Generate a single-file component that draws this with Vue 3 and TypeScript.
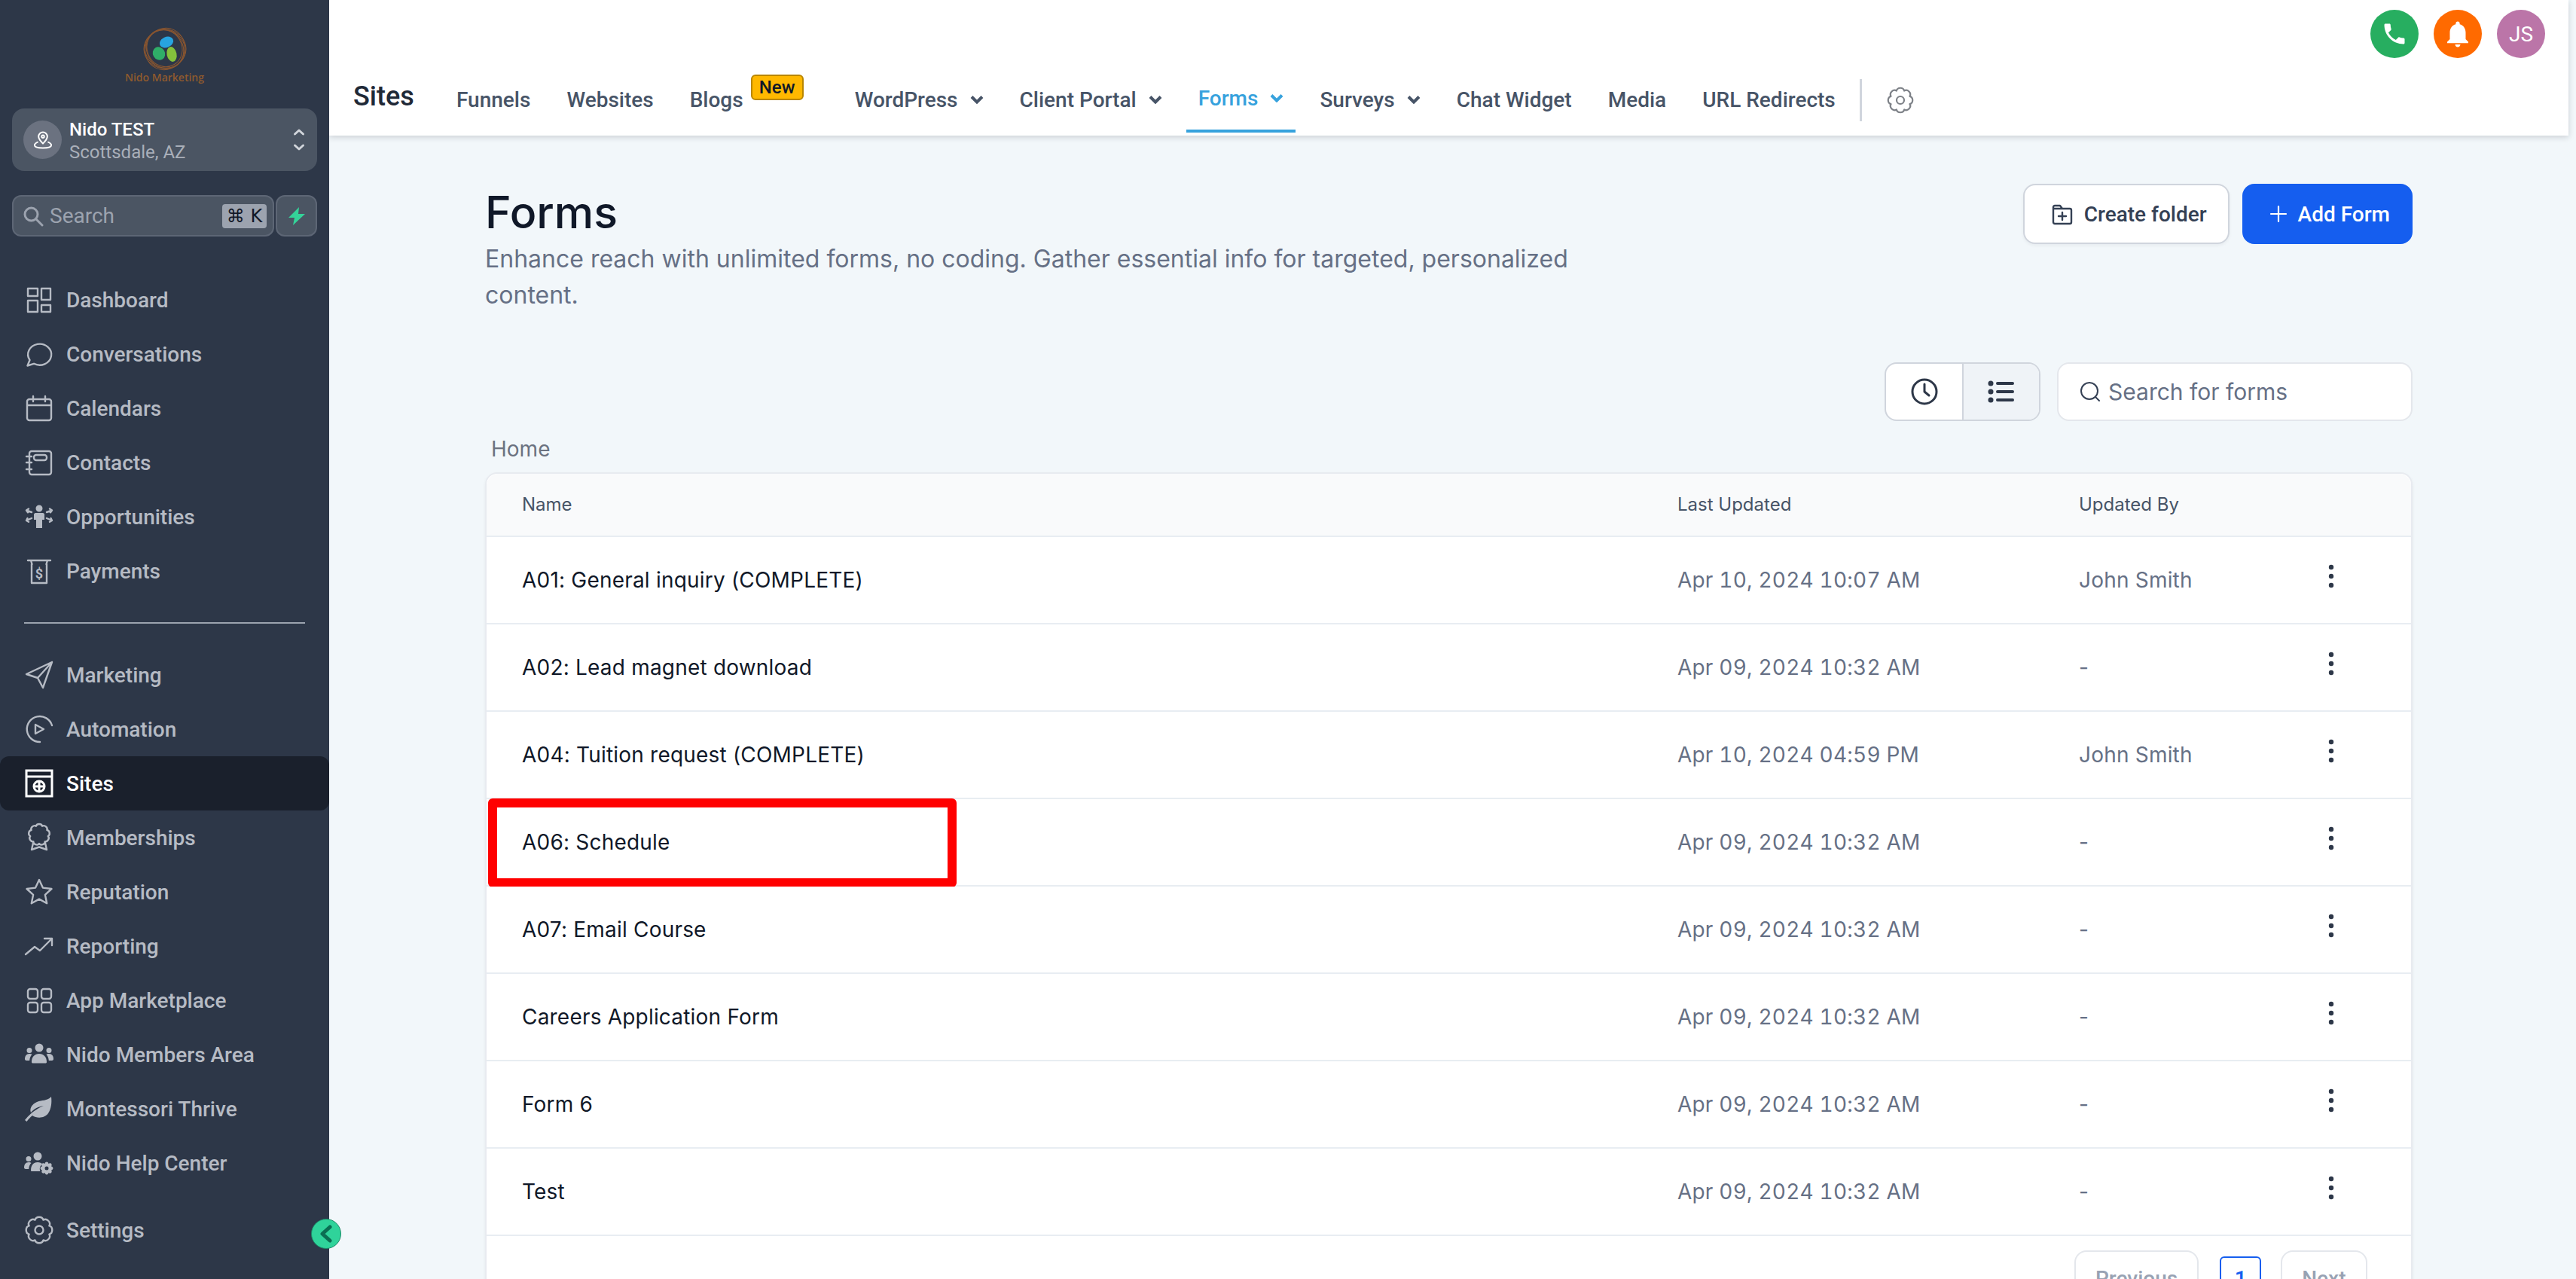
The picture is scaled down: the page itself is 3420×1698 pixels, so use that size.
<script setup lang="ts">
interface NavIcon {
  s?: string; // stroked part
  f?: string; // filled part
  t?: string; // small glyph in the middle
}
interface NavItem {
  label: string;
  icon: NavIcon;
  active?: boolean;
}

const circle = (cx: number, cy: number, r: number) =>
  `M${cx - r} ${cy}a${r} ${r} 0 1 0 ${r * 2} 0a${r} ${r} 0 1 0 ${-r * 2} 0z`;

const box = (x: number, y: number, w: number, h: number, r = 0) =>
  `M${x + r} ${y}h${w - 2 * r}a${r} ${r} 0 0 1 ${r} ${r}v${h - 2 * r}a${r} ${r} 0 0 1 ${-r} ${r}h${2 * r - w}a${r} ${r} 0 0 1 ${-r} ${-r}v${2 * r - h}a${r} ${r} 0 0 1 ${r} ${-r}z`;

// scalloped ring, used by the gears and the membership badge
const gear = (cx: number, cy: number, valley: number, tip: number, lobes: number) => {
  const step = (Math.PI * 2) / lobes;
  const pt = (a: number, r: number) =>
    `${(cx + Math.cos(a) * r).toFixed(2)} ${(cy + Math.sin(a) * r).toFixed(2)}`;
  let d = `M${pt(-Math.PI / 2 - step / 2, valley)}`;
  for (let i = 0; i < lobes; i++) {
    const a = -Math.PI / 2 - step / 2 + i * step;
    d += `C${pt(a + step * 0.22, tip * 1.12)} ${pt(a + step * 0.78, tip * 1.12)} ${pt(a + step, valley)}`;
  }
  return d + "z";
};

const people =
  circle(20, 11, 5.5) +
  "M10 30c0-7 4-11 10-11s10 4 10 11c0 1-1 1.500-2 1.500H12c-1 0-2-.5-2-1.500z" +
  circle(7, 14.500, 3.500) +
  circle(33, 14.500, 3.500) +
  "M1 26c0-4 2-7 6-7 1.500 0 2.500.4 3.500 1-2 2-3 4.500-3.300 8H3c-1 0-2-1-2-2z" +
  "M39 26c0-4-2-7-6-7-1.500 0-2.500.4-3.500 1 2 2 3 4.500 3.300 8H37c1 0 2-1 2-2z";

const mainNav: NavItem[] = [
  {
    label: "Dashboard",
    icon: { s: box(5, 5, 13, 10) + box(23, 5, 12, 15) + box(5, 21, 13, 15) + box(23, 27, 12, 9) },
  },
  {
    label: "Conversations",
    icon: { s: "M4.500 35.500 7.500 28A15.500 14 0 1 1 13 32.800z" },
  },
  {
    label: "Calendars",
    icon: { s: box(4, 8, 32, 28, 3) + "M4 16h32M12 4v7M28 4v7" },
  },
  {
    label: "Contacts",
    icon: { s: box(7, 5, 29, 31, 3) + box(13, 10, 17, 7, 3) + "M3 12h7M3 20h7M3 29h7" },
  },
  {
    label: "Opportunities",
    icon: {
      f: circle(20, 9, 4.500) + "M15 15h10c1 0 2 1 2 2v7h-3v11h-8V24h-3v-7c0-1 1-2 2-2z",
      s: "M10 14 3 11.500M3 11.500l3-2M3 11.500l2 2.800M30 14l7-2.500M37 11.500l-3-2M37 11.500l-2 2.800M10 22l-7 3M3 25l3 1.800M3 25l1.500-3M30 22l7 3M37 25l-3 1.800M37 25l-1.500-3",
    },
  },
  {
    label: "Payments",
    icon: { s: "M5 6h30M9 6l1.500 5M31 6l-1.500 5M10 11v25h20V11", t: "$" },
  },
];

const growNav: NavItem[] = [
  {
    label: "Marketing",
    icon: { s: "M3 19 37 3 25 37 18 24zM18 24 37 3" },
  },
  {
    label: "Automation",
    icon: { s: "M37 15A17 17 0 1 0 21 37M15 14l11 6-11 6z" },
  },
  {
    label: "Sites",
    active: true,
    icon: {
      s: "M3 3h34v34H3zM3 11h34M20 17v14M13 24h14" + circle(20, 24, 7),
    },
  },
  {
    label: "Memberships",
    icon: { s: gear(20, 16, 12, 13.500, 9) + "M12 27l-2 9 10-3.500L30 36l-2-9" },
  },
  {
    label: "Reputation",
    icon: {
      s: "M20 4l4.900 10.600 11.600 1.400-8.600 7.900 2.300 11.400-10.200-5.700-10.200 5.700 2.300-11.400-8.600-7.900 11.600-1.400z",
    },
  },
  {
    label: "Reporting",
    icon: { s: "M2 31 14 21l7 5 16-16M27 10h10v9" },
  },
  {
    label: "App Marketplace",
    icon: {
      s: box(5, 5, 13, 13, 3) + box(23, 5, 13, 13, 3) + box(5, 23, 13, 13, 3) + box(23, 23, 13, 13, 3),
    },
  },
  { label: "Nido Members Area", icon: { f: people } },
  {
    label: "Montessori Thrive",
    icon: {
      f: "M36 4C30 10 24 8 17 11 10 14 7 20 9 25 13 20 19 17 26 16 20 18.500 11 23 1 35l2.500 2c2.500-3.500 5-6 7.500-8 6 4 16 4 21-3 4-6 5-14 4-22z",
    },
  },
  {
    label: "Nido Help Center",
    icon: {
      f:
        circle(18, 11, 5.500) +
        circle(6, 14.500, 3.500) +
        "M9 30c0-7 3-11 9-11 3 0 5 1 6.500 2.500-3.500 2-4.500 6-3 9.500H11c-1 0-2 0-2-1z" +
        "M0 26c0-4 2-7 6-7 1.500 0 2.500.4 3.500 1-2 2-3 4.500-3.300 8H2c-1 0-2-1-2-2z" +
        gear(30, 27, 6.500, 8.500, 8) +
        circle(30, 27, 2.500),
    },
  },
];

const settingsNav: NavItem = {
  label: "Settings",
  icon: { s: gear(20, 20, 14.500, 17, 8) + circle(20, 20, 5.500) },
};

const headerGear = gear(20, 20, 13.500, 16, 8) + circle(20, 20, 5);

interface Tab {
  label: string;
  caret?: boolean;
  active?: boolean;
  badge?: string;
}

const tabs: Tab[] = [
  { label: "Funnels" },
  { label: "Websites" },
  { label: "Blogs", badge: "New" },
  { label: "WordPress", caret: true },
  { label: "Client Portal", caret: true },
  { label: "Forms", caret: true, active: true },
  { label: "Surveys", caret: true },
  { label: "Chat Widget" },
  { label: "Media" },
  { label: "URL Redirects" },
];

const forms = [
  { name: "A01: General inquiry (COMPLETE)", updated: "Apr 10, 2024 10:07 AM", by: "John Smith" },
  { name: "A02: Lead magnet download", updated: "Apr 09, 2024 10:32 AM", by: "-" },
  { name: "A04: Tuition request (COMPLETE)", updated: "Apr 10, 2024 04:59 PM", by: "John Smith" },
  { name: "A06: Schedule", updated: "Apr 09, 2024 10:32 AM", by: "-", marked: true },
  { name: "A07: Email Course", updated: "Apr 09, 2024 10:32 AM", by: "-" },
  { name: "Careers Application Form", updated: "Apr 09, 2024 10:32 AM", by: "-" },
  { name: "Form 6", updated: "Apr 09, 2024 10:32 AM", by: "-" },
  { name: "Test", updated: "Apr 09, 2024 10:32 AM", by: "-" },
];
</script>

<template>
  <div class="app">
    <aside class="sidebar">
      <div class="logo">
        <svg class="nest" viewBox="0 0 60 60" width="60" height="60">
          <g fill="none" stroke="#8a5630" stroke-width="1">
            <ellipse cx="30" cy="30" rx="28" ry="26" />
            <ellipse cx="30" cy="30" rx="26" ry="28" transform="rotate(25 30 30)" />
            <ellipse cx="30" cy="30" rx="27" ry="24" transform="rotate(60 30 30)" />
            <ellipse cx="30" cy="30" rx="25" ry="27" transform="rotate(110 30 30)" />
            <ellipse cx="30" cy="31" rx="23" ry="25" transform="rotate(150 30 30)" />
          </g>
          <ellipse cx="32" cy="21" rx="9.500" ry="7" fill="#27a4e0" transform="rotate(-25 32 21)" />
          <ellipse cx="22" cy="36" rx="8" ry="9" fill="#2fae68" transform="rotate(-30 22 36)" />
          <ellipse cx="39" cy="37" rx="6.500" ry="10" fill="#84c13c" transform="rotate(-12 39 37)" />
        </svg>
        <div class="logo-text">Nido Marketing</div>
      </div>

      <div class="location">
        <span class="loc-avatar">
          <svg viewBox="0 0 24 24" width="28" height="28" fill="none" stroke="#fff" stroke-width="1.700" stroke-linejoin="round">
            <path d="M12 16c-3-3-5-5.200-5-8a5 5 0 0 1 10 0c0 2.800-2 5-5 8z" />
            <circle cx="12" cy="8" r="1.500" />
            <path d="M6.500 14C4 15 2.500 16.200 2.500 17.800c0 2 3.500 3.200 9.500 3.200s9.500-1.200 9.500-3.200c0-1.600-1.500-2.800-4-3.800" />
          </svg>
        </span>
        <div class="loc-text">
          <div class="loc-name">Nido TEST</div>
          <div class="loc-city">Scottsdale, AZ</div>
        </div>
        <svg class="loc-caret" viewBox="0 0 16 32" width="16" height="32" fill="none" stroke="#d1d5db" stroke-width="3" stroke-linecap="round" stroke-linejoin="round">
          <path d="M2.500 8 8 3l5.500 5M2.500 23 8 28l5.500-5" />
        </svg>
      </div>

      <div class="search-row">
        <div class="side-search">
          <svg viewBox="0 0 28 28" width="28" height="28" fill="none" stroke="#9ca3af" stroke-width="3" stroke-linecap="round">
            <circle cx="11.500" cy="11.500" r="8.500" />
            <path d="m18 18 8 8" />
          </svg>
          <span class="side-search-label">Search</span>
          <span class="kbd">⌘ K</span>
        </div>
        <div class="bolt-box">
          <svg viewBox="0 0 24 24" width="24" height="26" fill="#34d399">
            <path d="M15 0 1 14h8l-2 10 16-15h-9z" />
          </svg>
        </div>
      </div>

      <nav class="side-nav">
        <a v-for="item in mainNav" :key="item.label" class="side-item">
          <svg class="side-icon" viewBox="0 0 40 40" width="40" height="40">
            <path v-if="item.icon.f" :d="item.icon.f" fill="currentColor" fill-rule="evenodd" />
            <path v-if="item.icon.s" :d="item.icon.s" class="stroke" />
            <text v-if="item.icon.t" x="20" y="30" class="glyph">{{ item.icon.t }}</text>
          </svg>
          <span>{{ item.label }}</span>
        </a>
        <div class="side-rule"></div>
        <a
          v-for="item in growNav"
          :key="item.label"
          class="side-item"
          :class="{ active: item.active }"
        >
          <svg class="side-icon" viewBox="0 0 40 40" width="40" height="40">
            <path v-if="item.icon.f" :d="item.icon.f" fill="currentColor" fill-rule="evenodd" />
            <path v-if="item.icon.s" :d="item.icon.s" class="stroke" />
          </svg>
          <span>{{ item.label }}</span>
        </a>
        <a class="side-item settings">
          <svg class="side-icon" viewBox="0 0 40 40" width="40" height="40">
            <path :d="settingsNav.icon.s" class="stroke" />
          </svg>
          <span>{{ settingsNav.label }}</span>
        </a>
      </nav>

      <button class="collapse">
        <svg viewBox="0 0 20 24" width="20" height="24" fill="none" stroke="#0b6e52" stroke-width="5" stroke-linecap="round" stroke-linejoin="round">
          <path d="M15 3 5 12l10 9" />
        </svg>
      </button>
    </aside>

    <div class="main">
      <header class="topbar">
        <div class="top-row">
          <span class="round green">
            <svg viewBox="0 0 24 24" width="36" height="36" fill="#fff">
              <path d="M6.600 10.800c1.400 2.800 3.800 5.100 6.600 6.600l2.200-2.200c.3-.3.7-.4 1-.2 1.100.4 2.300.6 3.600.6.600 0 1 .4 1 1V20c0 .6-.4 1-1 1C10.600 21 3 13.400 3 4c0-.6.4-1 1-1h3.500c.6 0 1 .4 1 1 0 1.300.2 2.500.6 3.600.1.3 0 .7-.2 1z" />
            </svg>
          </span>
          <span class="round orange">
            <svg viewBox="0 0 24 24" width="42" height="42" fill="#fff">
              <path d="M12 22c1.100 0 2-.9 2-2h-4c0 1.100.9 2 2 2zm6-6v-5c0-3.070-1.630-5.640-4.500-6.320V4c0-.83-.67-1.500-1.500-1.500s-1.500.67-1.500 1.500v.68C7.640 5.360 6 7.920 6 11v5l-2 2v1h16v-1z" />
            </svg>
          </span>
          <span class="round mauve">JS</span>
        </div>
        <div class="tab-row">
          <div class="section-title">Sites</div>
          <a
            v-for="tab in tabs"
            :key="tab.label"
            class="tab"
            :class="{ active: tab.active, 'has-badge': tab.badge }"
          >
            {{ tab.label }}
            <svg v-if="tab.caret" class="caret" viewBox="0 0 18 12" width="18" height="12" fill="none" stroke="currentColor" stroke-width="4">
              <path d="M2 2.500 9 9.500l7-7" />
            </svg>
            <span v-if="tab.badge" class="new-badge">{{ tab.badge }}</span>
          </a>
          <span class="tab-rule"></span>
          <svg class="tab-gear" viewBox="0 0 40 40" width="40" height="40" fill="none" stroke="#7d8187" stroke-width="2.200" stroke-linejoin="round">
            <path :d="headerGear" />
          </svg>
        </div>
      </header>

      <main class="page">
        <div class="page-head">
          <div class="page-intro">
            <h1>Forms</h1>
            <p>Enhance reach with unlimited forms, no coding. Gather essential info for targeted, personalized content.</p>
          </div>
          <div class="page-actions">
            <button class="btn light">
              <svg viewBox="0 0 28 32" width="28" height="32" fill="none" stroke="#344054" stroke-width="2.400" stroke-linejoin="round" stroke-linecap="round">
                <path d="M2 7a2 2 0 0 1 2-2h7l3 4h10a2 2 0 0 1 2 2v16a2 2 0 0 1-2 2H4a2 2 0 0 1-2-2zM2 9h12M14 14v10M9 19h10" />
              </svg>
              Create folder
            </button>
            <button class="btn primary">
              <svg viewBox="0 0 24 24" width="24" height="24" fill="none" stroke="#fff" stroke-width="2.200" stroke-linecap="round">
                <path d="M12 2v20M2 12h20" />
              </svg>
              Add Form
            </button>
          </div>
        </div>

        <div class="toolbar">
          <div class="view-toggle">
            <span class="view-btn">
              <svg viewBox="0 0 36 36" width="36" height="36" fill="none" stroke="#2d3748" stroke-width="3" stroke-linecap="round" stroke-linejoin="round">
                <circle cx="18" cy="18" r="16" />
                <path d="M18 8v10l6 5" />
              </svg>
            </span>
            <span class="view-btn on">
              <svg viewBox="0 0 36 30" width="36" height="30" fill="#2d3748">
                <circle cx="4" cy="4" r="3.500" />
                <circle cx="4" cy="15" r="3.500" />
                <circle cx="4" cy="26" r="3.500" />
                <rect x="11" y="2" width="24" height="4" rx="2" />
                <rect x="11" y="13" width="24" height="4" rx="2" />
                <rect x="11" y="24" width="24" height="4" rx="2" />
              </svg>
            </span>
          </div>
          <div class="form-search">
            <svg viewBox="0 0 28 28" width="28" height="28" fill="none" stroke="#344054" stroke-width="2" stroke-linecap="round">
              <circle cx="13" cy="13" r="11" />
              <path d="m21 21 5 5" />
            </svg>
            <span>Search for forms</span>
          </div>
        </div>

        <div class="crumb">Home</div>

        <section class="table">
          <div class="tr th">
            <span>Name</span>
            <span>Last Updated</span>
            <span>Updated By</span>
            <span></span>
          </div>
          <div v-for="form in forms" :key="form.name" class="tr row">
            <span class="name">{{ form.name }}</span>
            <span class="muted stamp">{{ form.updated }}</span>
            <span class="muted">{{ form.by }}</span>
            <svg class="dots" viewBox="0 0 8 32" width="8" height="32" fill="#2d3748">
              <circle cx="4" cy="4" r="3.200" />
              <circle cx="4" cy="16" r="3.200" />
              <circle cx="4" cy="28" r="3.200" />
            </svg>
            <div v-if="form.marked" class="marker"></div>
          </div>
          <div class="pager">
            <span class="page-btn">Previous</span>
            <span class="page-num">1</span>
            <span class="page-btn">Next</span>
          </div>
        </section>
      </main>
    </div>
  </div>
</template>

<style>
html,
body {
  margin: 0;
  height: 100%;
  overflow: hidden;
  background: #f2f7fa;
}
</style>

<style scoped>
.app {
  display: flex;
  height: 1698px;
  overflow: hidden;
  font-family: Inter, "Liberation Sans", sans-serif;
}

/* sidebar */
.sidebar {
  position: relative;
  flex: 0 0 437px;
  height: 1698px;
  background: #2d3748;
  font-family: Roboto, "Liberation Sans", sans-serif;
}

.logo {
  height: 144px;
  box-sizing: border-box;
  padding-top: 35px;
  text-align: center;
}

.nest {
  display: block;
  margin: 0 auto;
}

.logo-text {
  margin-top: 0;
  font-family: "Open Sans", sans-serif;
  font-size: 14px;
  line-height: 16px;
  font-weight: 600;
  color: #8f5a2e;
}

.location {
  display: flex;
  align-items: center;
  height: 83px;
  margin: 0 16px;
  padding: 0 16px 0 15px;
  background: #4b5563;
  border-radius: 16px;
  box-sizing: border-box;
}

.loc-avatar {
  display: flex;
  align-items: center;
  justify-content: center;
  width: 51px;
  height: 51px;
  border-radius: 50%;
  background: #6b7280;
}

.loc-text {
  flex: 1;
  margin-left: 10px;
  padding-top: 3px;
}

.loc-name {
  font-size: 24px;
  line-height: 30px;
  font-weight: 500;
  color: #fff;
}

.loc-city {
  font-size: 24px;
  line-height: 30px;
  color: #a9afb9;
}

.loc-caret {
  flex: none;
}

.search-row {
  display: flex;
  gap: 2px;
  margin: 32px 16px 0;
}

.side-search {
  flex: 1;
  display: flex;
  align-items: center;
  height: 55px;
  padding: 0 8px 0 12px;
  background: #4b5563;
  border: 2px solid #5d6675;
  border-radius: 12px;
  box-sizing: border-box;
}

.side-search-label {
  flex: 1;
  margin-left: 8px;
  font-size: 28px;
  color: #9ca3af;
}

.kbd {
  width: 59px;
  height: 32px;
  line-height: 32px;
  text-align: center;
  font-size: 24px;
  color: #111827;
  background: #9ca3af;
  border-radius: 4px;
  font-family: "DejaVu Sans", sans-serif;
}

.bolt-box {
  display: flex;
  align-items: center;
  justify-content: center;
  width: 55px;
  height: 55px;
  background: #4b5563;
  border: 2px solid #5d6675;
  border-radius: 12px;
  box-sizing: border-box;
}

.side-nav {
  margin-top: 48px;
}

.side-item {
  display: flex;
  align-items: center;
  gap: 16px;
  height: 72px;
  padding-left: 32px;
  font-size: 28px;
  font-weight: 500;
  color: #b6bbc4;
  border-radius: 12px;
}

.side-item.active {
  background: #1a202c;
  color: #fff;
}

.side-item.settings {
  margin-top: 17px;
}

.side-icon {
  flex: none;
}

.stroke {
  fill: none;
  stroke: currentColor;
  stroke-width: 2.400;
  stroke-linejoin: round;
  stroke-linecap: round;
}

.side-item.active .stroke {
  stroke-width: 3;
  stroke-linejoin: miter;
}

.glyph {
  font-family: Roboto, sans-serif;
  font-size: 18px;
  font-weight: 700;
  fill: currentColor;
  text-anchor: middle;
}

.side-rule {
  height: 2px;
  margin: 32px 32px;
  background: #9ca3af;
}

.collapse {
  position: absolute;
  top: 1618px;
  left: 413px;
  display: flex;
  align-items: center;
  justify-content: center;
  width: 40px;
  height: 40px;
  padding: 0;
  background: #2fd39a;
  border: 1px solid #1c8a68;
  border-radius: 50%;
}

/* top bar */
.main {
  flex: 1;
  min-width: 0;
}

.topbar {
  width: 2973px;
  height: 180px;
  background: #fff;
  box-shadow: 0 2px 8px rgba(16, 24, 40, 0.18);
  font-family: Roboto, "Liberation Sans", sans-serif;
}

.top-row {
  display: flex;
  justify-content: flex-end;
  align-items: center;
  gap: 20px;
  height: 90px;
  padding-right: 31px;
  box-sizing: border-box;
}

.round {
  display: flex;
  align-items: center;
  justify-content: center;
  width: 64px;
  height: 64px;
  border-radius: 50%;
  color: #fff;
  font-size: 28px;
}

.green {
  background: #27ae60;
}

.orange {
  background: #ff6a00;
}

.mauve {
  background: #bb75a8;
}

.tab-row {
  display: flex;
  align-items: stretch;
  gap: 16px;
  height: 86px;
  padding-left: 32px;
}

.section-title {
  align-self: center;
  width: 105px;
  margin-top: -10px;
  font-size: 36px;
  font-weight: 500;
  color: #1f2937;
}

.tab {
  position: relative;
  display: flex;
  align-items: center;
  gap: 16px;
  padding: 2px 16px 0;
  border-bottom: 4px solid transparent;
  font-size: 28px;
  font-weight: 500;
  color: #475467;
  white-space: nowrap;
}

.tab.active {
  padding-top: 0;
  padding-bottom: 2px;
  color: #37a2dd;
  border-bottom-color: #37a2dd;
}

.tab.has-badge {
  padding-right: 116px;
}

.new-badge {
  position: absolute;
  left: 97px;
  top: 9px;
  width: 70px;
  height: 34px;
  line-height: 30px;
  text-align: center;
  font-size: 24px;
  color: #101828;
  background: #ffb800;
  border: 2px solid #b98600;
  border-radius: 6px;
  box-sizing: border-box;
}

.tab-rule {
  align-self: center;
  width: 3px;
  height: 56px;
  margin-left: 0;
  background: #d0d5dd;
}

.tab-gear {
  align-self: center;
  margin-left: 15px;
}

/* page body */
.page {
  width: 2559px;
  margin-left: 207px;
  padding-top: 64px;
}

.page-head {
  display: flex;
  justify-content: space-between;
  align-items: flex-start;
}

.page-intro {
  width: 1450px;
}

h1 {
  margin: 0;
  font-size: 59px;
  line-height: 76px;
  font-weight: 500;
  color: #101828;
}

.page-intro p {
  margin: 0;
  font-size: 32px;
  line-height: 48px;
  color: #667085;
}

.page-actions {
  display: flex;
  gap: 17px;
}

.btn {
  display: flex;
  align-items: center;
  gap: 14px;
  height: 80px;
  padding: 0 28px 0 34px;
  font-family: Roboto, sans-serif;
  font-size: 28px;
  font-weight: 500;
  border-radius: 16px;
  box-sizing: border-box;
}

.btn.light {
  gap: 15px;
  padding-left: 36px;
  color: #344054;
  background: #fff;
  border: 2px solid #d0d5dd;
  box-shadow: 0 2px 4px rgba(16, 24, 40, 0.05);
}

.btn.primary {
  color: #fff;
  background: #155eef;
  border: 2px solid #155eef;
}

.toolbar {
  display: flex;
  justify-content: flex-end;
  gap: 22px;
  margin-top: 65px;
}

.view-toggle {
  display: flex;
  height: 78px;
  border: 2px solid #d0d5dd;
  border-radius: 16px;
  overflow: hidden;
  box-sizing: border-box;
  background: #fff;
}

.view-btn {
  display: flex;
  align-items: center;
  justify-content: center;
  width: 101px;
  box-sizing: border-box;
}

.view-btn.on {
  width: 102px;
  background: #eff3f7;
  border-left: 2px solid #d0d5dd;
}

.form-search {
  display: flex;
  align-items: center;
  gap: 10px;
  width: 472px;
  height: 78px;
  padding-left: 28px;
  background: #fff;
  border: 2px solid #e4e7ec;
  border-radius: 16px;
  box-sizing: border-box;
  font-size: 30px;
  color: #667085;
}

.crumb {
  margin-top: 17px;
  padding-left: 8px;
  font-size: 28px;
  line-height: 40px;
  color: #6b7280;
}

.table {
  margin-top: 11px;
  background: #fff;
  border: 2px solid #e8ebf0;
  border-radius: 16px;
  box-sizing: border-box;
  box-shadow: 0 2px 4px rgba(16, 24, 40, 0.06);
}

.tr {
  position: relative;
  display: grid;
  grid-template-columns: 1534px 533px 300px 70px;
  align-items: center;
  padding-left: 47px;
  border-bottom: 2px solid #e8edf2;
  box-sizing: border-box;
}

.th {
  height: 84px;
  padding-bottom: 2px;
  background: #f9fafb;
  border-radius: 16px 16px 0 0;
  font-size: 24px;
  color: #475467;
}

.row {
  height: 116px;
  font-size: 28px;
  letter-spacing: 0.2px;
  background: #fff;
}

.name {
  color: #101828;
}

.muted {
  color: #667085;
}

.stamp {
  font-variant-numeric: tabular-nums;
}

.dots {
  justify-self: center;
  margin-top: -10px;
}

.marker {
  position: absolute;
  left: 2px;
  top: -1px;
  width: 622px;
  height: 118px;
  border: 12px solid #ff0000;
  border-radius: 6px;
  box-sizing: border-box;
}

.pager {
  display: flex;
  align-items: center;
  padding: 19px 0 0 2108px;
  font-family: Roboto, sans-serif;
  font-size: 28px;
  font-weight: 500;
  color: #98a2b3;
}

.page-btn {
  height: 76px;
  line-height: 72px;
  padding: 0 26px;
  border: 2px solid #e4e7ec;
  border-radius: 16px;
  box-sizing: border-box;
}

.page-num {
  width: 55px;
  height: 60px;
  line-height: 56px;
  margin: 0 26px 0 28px;
  text-align: center;
  color: #155eef;
  border: 2px solid #155eef;
  border-radius: 6px;
  box-sizing: border-box;
}
</style>
